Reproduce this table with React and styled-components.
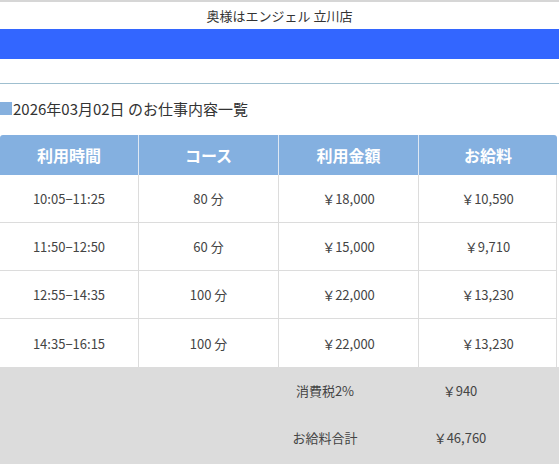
import styled, { createGlobalStyle } from 'styled-components'

const GlobalStyle = createGlobalStyle`
*, *::before, *::after {
  box-sizing: border-box;
}
body {
  margin: 0;
  background: #fff;
  font-family: "Noto Sans CJK JP", "Noto Sans", sans-serif;
  color: #333;
}
`

const rows = [
  { time: '10:05−11:25', course: '80 分', price: '￥18,000', pay: '￥10,590' },
  { time: '11:50−12:50', course: '60 分', price: '￥15,000', pay: '￥9,710' },
  { time: '12:55−14:35', course: '100 分', price: '￥22,000', pay: '￥13,230' },
  { time: '14:35−16:15', course: '100 分', price: '￥22,000', pay: '￥13,230' },
]

const App = () => {
  return (
    <Page>
      <GlobalStyle />
      <ShopName>奥様はエンジェル 立川店</ShopName>
      <BlueBar />
      <Spacer />
      <Heading>
        <Marker />
        2026年03月02日 のお仕事内容一覧
      </Heading>
      <Table>
        <HeadRow>
          <HeadCell>利用時間</HeadCell>
          <HeadCell>コース</HeadCell>
          <HeadCell>利用金額</HeadCell>
          <HeadCell last>お給料</HeadCell>
        </HeadRow>
        {rows.map((r, i) => (
          <Row key={i}>
            <Cell>{r.time}</Cell>
            <Cell>{r.course}</Cell>
            <Cell>{r.price}</Cell>
            <Cell last>{r.pay}</Cell>
          </Row>
        ))}
      </Table>
      <Summary>
        <SumRow>
          <span />
          <SumCell>消費税2%</SumCell>
          <SumCell>￥940</SumCell>
        </SumRow>
        <SumRow>
          <span />
          <SumCell>お給料合計</SumCell>
          <SumCell>￥46,760</SumCell>
        </SumRow>
      </Summary>
    </Page>
  )
}

const Page = styled.div`
border-top: 2px solid #d6d6d6;
min-height: 464px;
display: flex;
flex-direction: column;
`
const ShopName = styled.div`
height: 27px;
display: flex;
align-items: center;
justify-content: center;
font-size: 13px;
color: #333;
`
const BlueBar = styled.div`
height: 30px;
background: #3366ff;
`
const Spacer = styled.div`
height: 25px;
border-bottom: 1px solid #9fbfcf;
`
const Heading = styled.h2`
margin: 0;
height: 51px;
padding-bottom: 2px;
display: flex;
align-items: center;
font-size: 15px;
font-weight: normal;
color: #333;
`
const Marker = styled.span`
width: 12px;
height: 13px;
background: #86b0de;
margin-right: 1px;
`
const Table = styled.div`
width: 557px;
display: flex;
flex-direction: column;
`
const HeadRow = styled.div`
display: grid;
grid-template-columns: 139px 140px 140px 1fr;
height: 40px;
background: #84b0e0;
border-radius: 3px 3px 0 0;
`
const HeadCell = styled.div`
display: flex;
align-items: center;
justify-content: center;
color: #fff;
font-size: 16px;
font-weight: bold;
border-right: ${props => props.last ? 'none' : '1px solid #dfe8f3'};
`
const Row = styled.div`
display: grid;
grid-template-columns: 139px 140px 140px 1fr;
height: 48px;
border-bottom: 1px solid #dcdcdc;
&:last-child {
  border-bottom: none;
}
`
const Cell = styled.div`
display: flex;
align-items: center;
justify-content: center;
font-size: 13px;
color: #444;
border-right: 1px solid #dcdcdc;
`
const Summary = styled.div`
flex: 1;
background: #dcdcdc;
display: flex;
flex-direction: column;
`
const SumRow = styled.div`
display: grid;
grid-template-columns: 263px 124px 146px 1fr;
height: 47px;
`
const SumCell = styled.div`
display: flex;
align-items: center;
justify-content: center;
font-size: 13px;
color: #444;
`

export default App
